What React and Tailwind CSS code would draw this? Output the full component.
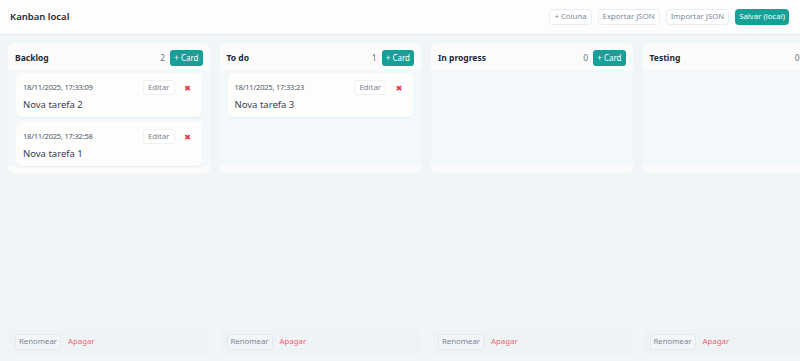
import { useState } from 'react';

const FONT = { fontFamily: '"Noto Sans", "DejaVu Sans", sans-serif' };

const INITIAL = [
  {
    id: 'backlog',
    title: 'Backlog',
    cards: [
      { id: 'c2', date: '18/11/2025, 17:33:09', text: 'Nova tarefa 2' },
      { id: 'c1', date: '18/11/2025, 17:32:58', text: 'Nova tarefa 1' },
    ],
  },
  {
    id: 'todo',
    title: 'To do',
    cards: [{ id: 'c3', date: '18/11/2025, 17:33:23', text: 'Nova tarefa 3' }],
  },
  { id: 'progress', title: 'In progress', cards: [] },
  { id: 'testing', title: 'Testing', cards: [] },
];

export default function App() {
  const [columns] = useState(INITIAL);

  return (
    <div style={FONT} className="w-[800px] h-[361px] flex flex-col bg-[#f0f5f8] overflow-hidden">
      {/* Header */}
      <header className="h-[35px] shrink-0 flex items-center justify-between pl-[10px] pr-[11px] bg-[#fdfdfd] border-b border-[#e4ecf1]">
        <h1 className="text-[9.5px] font-semibold text-[#1f2937]">Kanban local</h1>
        <div className="flex items-center gap-[6px]">
          <HeaderButton>+ Coluna</HeaderButton>
          <HeaderButton>Exportar JSON</HeaderButton>
          <HeaderButton>Importar JSON</HeaderButton>
          <button className="h-[16px] px-[4px] rounded-[4px] bg-[#17a097] text-white text-[7.8px] leading-none">
            Salvar (local)
          </button>
        </div>
      </header>

      {/* Board */}
      <main className="flex-1 min-h-0 flex gap-[10px] pl-[8px] pt-[8px] pb-[6px]">
        {columns.map(col => (
          <Column key={col.id} column={col} />
        ))}
      </main>
    </div>
  );
}

function HeaderButton({ children }) {
  return (
    <button className="h-[16px] px-[4px] rounded-[4px] bg-white border border-[#e8edf1] text-[#7a879b] text-[7.8px] leading-none">
      {children}
    </button>
  );
}

function Column({ column }) {
  return (
    <section className="w-[201.5px] shrink-0 flex flex-col">
      <div className="rounded-[6px] bg-[#fafbfa] pb-[8px]">
        <div className="h-[27px] pt-[3px] flex items-center justify-between pl-[7px] pr-[7px]">
          <h2 className="text-[8.5px] font-bold text-[#1e293b]">{column.title}</h2>
          <div className="flex items-center gap-[5px]">
            <span className="text-[8.5px] text-[#6b7280]">{column.cards.length}</span>
            <button className="h-[16px] px-[4px] rounded-[3px] bg-[#17a097] text-white text-[8px] leading-none">
              + Card
            </button>
          </div>
        </div>
        <div className="min-h-[95px] bg-[#f3f8fa] px-[8px] pt-[3px] flex flex-col gap-[5px]">
          {column.cards.map(card => (
            <Card key={card.id} card={card} />
          ))}
        </div>
      </div>

      <div className="flex-1" />

      <div className="h-[26px] rounded-[5px] bg-[#eef3f6] flex items-center gap-[7px] px-[7px]">
        <button className="h-[16px] px-[3px] rounded-[3px] border border-[#e3e9ee] bg-[#f3f6f8] text-[#7d8596] text-[7.8px] leading-none">
          Renomear
        </button>
        <button className="text-[7.8px] text-[#f0646c] leading-none">Apagar</button>
      </div>
    </section>
  );
}

function Card({ card }) {
  return (
    <div className="rounded-[5px] bg-[#fdfdfc] shadow-[0_1px_2px_rgba(15,23,42,0.06)] pl-[7px] pr-[8px] pt-[7px] pb-[6px]">
      <div className="flex items-center justify-between h-[15px]">
        <span className="text-[7.5px] tracking-[-0.2px] text-[#4b5563]">{card.date}</span>
        <div className="flex items-center gap-[7px]">
          <button className="h-[15px] px-[4px] rounded-[3px] border border-[#eef0f1] bg-white text-[#7b8190] text-[7.8px] leading-none">
            Editar
          </button>
          <button className="w-[12px] text-[8px] font-bold text-[#e8344a] leading-none">✖</button>
        </div>
      </div>
      <p className="mt-[4px] text-[9.5px] leading-[12px] text-[#374151]">{card.text}</p>
    </div>
  );
}
